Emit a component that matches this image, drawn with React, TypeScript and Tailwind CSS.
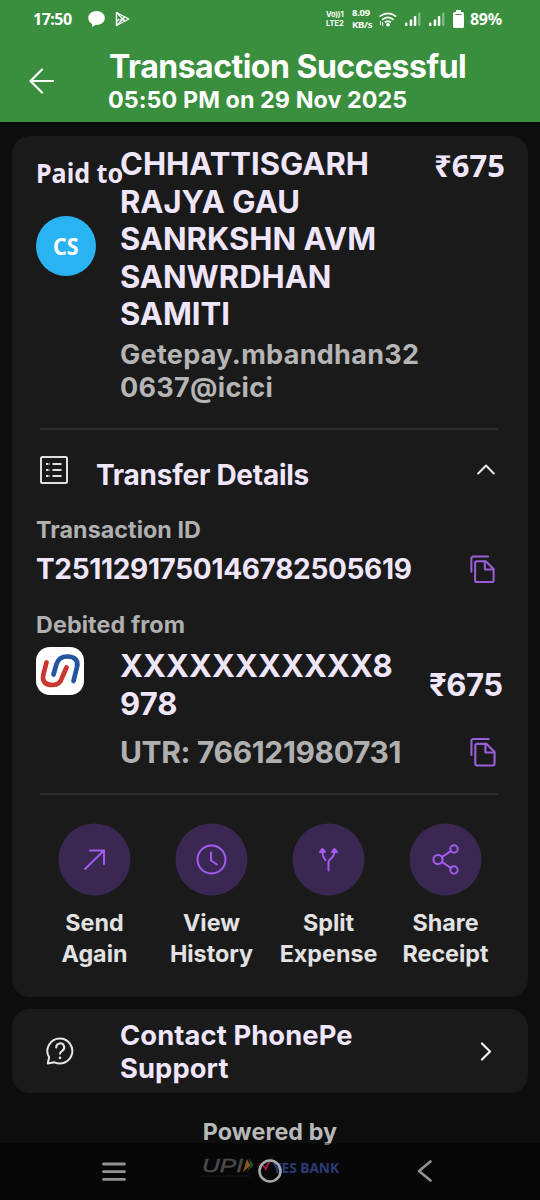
import type { ReactNode } from 'react';

interface Action {
  label: string[];
  icon: ReactNode;
}

const CopyIcon = ({ className = '' }: { className?: string }) => (
  <svg viewBox="0 0 27 31" fill="none" stroke="#9a5fd8" strokeWidth="2.200" strokeLinejoin="round" strokeLinecap="round" className={className}>
    <path d="M1.500 18V3.500a2 2 0 0 1 2-2H19.500" />
    <path d="M7.500 6.500h9.500l8.500 8.500v12a2 2 0 0 1-2 2h-16a2 2 0 0 1-2-2v-18.500a2 2 0 0 1 2-2z" />
    <path d="M16 7v8.500h9" />
  </svg>
);

const SignalIcon = () => (
  <svg viewBox="0 0 17 15" className="h-[15px] w-[17px]" fill="#fff">
    <rect x="0" y="10.500" width="2.500" height="3.500" rx="1" />
    <rect x="4.700" y="7.500" width="2.500" height="6.500" rx="1" />
    <rect x="8.800" y="4" width="2.500" height="10" rx="1" />
    <rect x="13" y="0.500" width="2.500" height="13.500" rx="1" opacity="0.35" />
  </svg>
);

const actions: Action[] = [
  {
    label: ['Send', 'Again'],
    icon: <path d="M26.500 45.500 45.500 27M31.500 27h14v13.500" />,
  },
  {
    label: ['View', 'History'],
    icon: (
      <>
        <circle cx="36" cy="36" r="14" />
        <path d="M35.500 29v8l6 4" />
      </>
    ),
  },
  {
    label: ['Split', 'Expense'],
    icon: (
      <>
        <path d="M36 47v-8.500c0-3 6-3.500 6-11M30 27.500c0 4.500 1 7 3 9" />
        <path d="M27.500 28.500l2.500-3 2.500 3zM39.500 28.500l2.500-3 2.500 3z" fill="#a45cf0" />
      </>
    ),
  },
  {
    label: ['Share', 'Receipt'],
    icon: (
      <>
        <circle cx="28.500" cy="36" r="4.600" />
        <circle cx="44.500" cy="25.500" r="3.700" />
        <circle cx="44.500" cy="46.500" r="3.700" />
        <path d="M32.500 33.500l8.800-5.800M32.500 38.500l8.800 5.800" />
      </>
    ),
  },
];

const StatusBar = () => (
  <div className="flex h-[38px] items-center pl-[33px] pr-[38px] font-['Noto_Sans',sans-serif] font-bold text-white">
    <span className="w-[55px] text-[16px] leading-[18px] tracking-[-0.5px]">17:50</span>
    <svg viewBox="0 0 17 16" className="h-4 w-[17px]" fill="#fff">
      <path d="M8.500 0C3.900 0 .3 3 .3 7c0 2.600 1.500 4.900 3.900 6.100L4 16l3.400-2h1.100c4.700 0 8.300-3.100 8.300-7S13.200 0 8.500 0z" />
    </svg>
    <svg viewBox="0 0 15 16" className="ml-2.5 h-4 w-[15px]" fill="none" stroke="#fff" strokeWidth="1.400" strokeLinejoin="round">
      <path d="M1.500 1.500v13L13.800 8z" />
      <path d="M1.500 1.500l8.500 8.700M1.500 14.500L10 5.800M4.300 8l-2.800 2.500M7 8l-1.500 1.500" />
    </svg>
    <div className="ml-auto flex items-center">
      <div className="w-[26px] font-['Inter',sans-serif] text-[7.500px] leading-[9px]">
        <div className="tracking-[-0.200px]">Vo))1</div>
        <div>LTE2</div>
      </div>
      <div className="w-[27px] text-[9.500px] leading-[12px] tracking-[-0.3px]">
        <div>8.09</div>
        <div>KB/s</div>
      </div>
      <svg viewBox="0 0 18 15" className="mr-2 h-[15px] w-[18px]" fill="none" stroke="#fff" strokeWidth="1.700" strokeLinecap="round">
        <path d="M1.200 4.200c4.600-3.700 10.800-3.700 15.400 0M3.800 7.300c3.100-2.400 7.100-2.400 10.200 0M6.500 10c1.600-1.200 3.200-1.200 4.800 0" />
        <circle cx="9" cy="12.600" r="1" fill="#fff" />
        <path d="M1.500 9.500v3M3.700 10.500v3" strokeWidth="1" />
      </svg>
      <SignalIcon />
      <span className="w-[7px]" />
      <SignalIcon />
      <svg viewBox="0 0 11 18" className="ml-[7px] h-[18px] w-[11px]" fill="#fff">
        <path d="M3 0h5v2h1.500A1.500 1.500 0 0 1 11 3.500v13A1.500 1.500 0 0 1 9.500 18h-8A1.500 1.500 0 0 1 0 16.500v-13A1.500 1.500 0 0 1 1.500 2H3z" />
        <path d="M2.500 4.500h6" stroke="#388e3c" strokeWidth="1" />
      </svg>
      <span className="ml-1.5 w-8 text-[16px] leading-[18px] tracking-[-0.3px]">89%</span>
    </div>
  </div>
);

const Header = () => (
  <header className="h-[122px] bg-[#398f3d] text-white">
    <StatusBar />
    <div className="flex pt-[9px]">
      <svg viewBox="0 0 26 26" className="ml-[29px] mt-[21px] h-[26px] w-[26px]" fill="none" stroke="#fff" strokeWidth="2.200" strokeLinecap="round" strokeLinejoin="round">
        <path d="M24 13H1.500M13 1.500L1.500 13l11.500 11.500" />
      </svg>
      <div className="ml-[54px]">
        <h1 className="whitespace-nowrap text-[32px] font-bold leading-[39px] tracking-[-0.500px]">Transaction Successful</h1>
        <p className="-ml-px whitespace-nowrap text-[23.300px] font-bold leading-7 tracking-[0.080px]">05:50 PM on 29 Nov 2025</p>
      </div>
    </div>
  </header>
);

const Payee = () => (
  <section className="flex h-[292px] pl-6 pt-[9px]">
    <div className="w-[84px] shrink-0 pt-[10px]">
      <div className="h-[37px] origin-left scale-x-[0.93] whitespace-nowrap font-['Noto_Sans',sans-serif] text-[27px] font-bold leading-[36px] text-[#f0e6fc]">
        Paid to
      </div>
      <div className="mt-[24px] flex h-[60px] w-[60px] items-center justify-center rounded-full bg-[#29b3f3] font-['Noto_Sans',sans-serif] text-[23px] font-bold text-white">
        <span className="scale-x-[0.93]">CS</span>
      </div>
    </div>
    <div className="w-[314px] shrink-0">
      <h2 className="text-[31px] font-bold leading-[37.500px] text-[#f0e6fc]">
        CHHATTISGARH
        <br />
        RAJYA GAU
        <br />
        SANRKSHN AVM
        <br />
        SANWRDHAN
        <br />
        SAMITI
      </h2>
      <p className="mt-[6.500px] text-[27px] font-bold leading-[32.700px] tracking-[0.300px] text-[#b5b5b5]">
        Getepay.mbandhan32
        <br />
        0637@icici
      </p>
    </div>
    <span className="mt-px h-[38px] font-['Noto_Sans',sans-serif] text-[31px] font-bold leading-[38px] text-[#f0e6fc]">₹675</span>
  </section>
);

const TransferDetails = () => (
  <section className="h-[363px] pl-6">
    <div className="flex h-[61px] pt-[27px]">
      <svg viewBox="0 0 28 28" className="-mt-px ml-1 h-7 w-7" fill="none" stroke="#e0e0e0" strokeWidth="2">
        <rect x="1" y="1" width="26" height="26" rx="1.500" />
        <path d="M12.500 8h9M12.500 14h9M12.500 20h9" />
        <path d="M6 8h4M6 14h4M6 20h4" strokeDasharray="2.500 1" />
      </svg>
      <h3 className="ml-[28px] mt-px w-[381px] text-[28px] font-bold leading-[34px] tracking-[-0.260px] text-[#f0e6fc]">Transfer Details</h3>
      <svg viewBox="0 0 18 11" className="mt-[7px] h-[11px] w-[18px]" fill="none" stroke="#e6e6e6" strokeWidth="2" strokeLinecap="round" strokeLinejoin="round">
        <path d="M1.200 9.500L9 1.500l7.800 8" />
      </svg>
    </div>
    <p className="mt-[25px] text-[23.300px] font-bold leading-7 tracking-[0.050px] text-[#b0b0b0]">Transaction ID</p>
    <div className="mt-2 flex h-[34px]">
      <span className="w-[434px] text-[28px] font-bold leading-[34px] tracking-[-0.330px] text-[#f0e6fc]">T2511291750146782505619</span>
      <CopyIcon className="mt-[3px] h-[29px] w-[25px]" />
    </div>
    <p className="mt-[25px] text-[23.300px] font-bold leading-7 tracking-[0.100px] text-[#b0b0b0]">Debited from</p>
    <div className="mt-[8px] flex h-[86px]">
      <svg viewBox="0 0 48 48" className="h-12 w-12 shrink-0" fill="none" strokeWidth="4.700" strokeLinecap="round">
        <rect width="48" height="48" rx="14" fill="#fff" />
        <path d="M10.500 15.500L7.500 27c-2 8 2.500 11 9 11 6 0 8.500-3 9.800-8L30.500 20.500" stroke="#c9372f" />
        <path d="M17.500 27.500L20.500 17c1.700-5.500 5.500-7.500 11-7.500 7.500 0 11 4 9.500 10.500L37.500 34" stroke="#2257a0" />
      </svg>
      <div className="ml-9 w-[309px] text-[31px] font-bold leading-[37.500px] tracking-[0.120px] text-[#f0e6fc]">
        XXXXXXXXXXX8
        <br />
        978
      </div>
      <span className="mt-[19px] h-[37px] text-[31px] font-bold leading-[37px] tracking-[-0.400px] text-[#f0e6fc]">₹675</span>
    </div>
    <div className="flex">
      <span className="ml-[84px] w-[350px] text-[30px] font-bold leading-[38px] tracking-[-0.370px] text-[#b0b0b0]">UTR: 766121980731</span>
      <CopyIcon className="mt-1 h-[31px] w-[26px]" />
    </div>
  </section>
);

const Divider = () => <div className="ml-7 mr-[30px] h-0.5 bg-[#2d2d2d]" />;

const QuickActions = () => (
  <section className="grid grid-cols-[repeat(4,117px)] pl-6 pt-[28.500px]">
    {actions.map((action) => (
      <div key={action.label[1]} className="flex flex-col items-center">
        <svg viewBox="0.500 0.500 72 72" className="h-[72px] w-[72px] overflow-visible" fill="none" stroke="#a45cf0" strokeWidth="2" strokeLinecap="round" strokeLinejoin="round">
          <circle cx="36" cy="36" r="36" fill="#3a2852" stroke="none" />
          {action.icon}
        </svg>
        <span className="mt-[11px] text-center text-[23.300px] font-bold leading-[31.500px] text-[#e2e2e2]">
          {action.label[0]}
          <br />
          {action.label[1]}
        </span>
      </div>
    ))}
  </section>
);

const Support = () => (
  <section className="mx-3 mt-3 flex h-[84px] items-center rounded-[18px] bg-[#1a1a1a]">
    <svg viewBox="0 0 28 28" className="ml-[34px] h-7 w-7" fill="none" stroke="#e6e6e6" strokeWidth="2" strokeLinecap="round" strokeLinejoin="round">
      <path d="M14 1.500A12.500 12.500 0 1 1 8.500 25.300L1.800 26.500l1.300-6.200A12.500 12.500 0 0 1 14 1.500z" />
      <path d="M10.200 10.500a4 4 0 1 1 6 3.300c-1.500.8-2.200 1.500-2.200 3" />
      <path d="M14 20.800v.2" strokeWidth="2.400" />
    </svg>
    <h3 className="ml-[46px] w-[360px] pt-0.5 text-[27.300px] font-bold leading-[33px] tracking-[0.120px] text-[#f0e6fc]">
      Contact PhonePe
      <br />
      Support
    </h3>
    <svg viewBox="0 0 12 20" className="h-5 w-3" fill="none" stroke="#f0f0f0" strokeWidth="2.200" strokeLinecap="round" strokeLinejoin="round">
      <path d="M2 2.500l8 8-8 8" />
    </svg>
  </section>
);

const Footer = () => (
  <footer className="mt-[25px] flex flex-col items-center">
    <p className="text-[23.300px] font-bold leading-7 tracking-[0.080px] text-[#b8b8b8]">Powered by</p>
    <svg viewBox="0 0 144 26" className="mt-[8px] h-[26px] w-[144px]">
      <text x="4" y="18" textLength="41" lengthAdjust="spacingAndGlyphs" fill="#7c7c7c" stroke="#7c7c7c" strokeWidth="0.400" fontSize="19" fontStyle="italic" fontFamily="Liberation Sans">
        UPI
      </text>
      <path d="M49 5l3.500 6.500L45 18z" fill="#f58a35" />
      <path d="M51 4l4.500 7L48 18.500l4.500-7z" fill="#2f9440" />
      <path d="M3 22h50" stroke="#333" strokeDasharray="2 1" />
      <path d="M60 9.500c4-.5 6 1.500 7.500 3.500 2-5 5-8 9-11-4 5-6 9-8.500 15.500-2-4-4-6.500-8-8z" fill="#ff3560" />
      <text x="75" y="18.500" textLength="66" lengthAdjust="spacingAndGlyphs" fill="#4862c4" fontSize="14" fontWeight="700" fontFamily="Open Sans">
        YES BANK
      </text>
    </svg>
  </footer>
);

const NavBar = () => (
  <nav className="absolute inset-x-0 bottom-0 flex h-[57px] bg-black/40">
    <svg viewBox="0 0 24 19" className="ml-[102px] mt-[19px] h-[19px] w-6" stroke="#929292" strokeWidth="2.800" strokeLinecap="round">
      <path d="M1.500 2h21M1.500 9.700h21M1.500 17.400h21" />
    </svg>
    <svg viewBox="0 0 24 24" className="ml-[132px] mt-4 h-6 w-6" fill="none" stroke="#a8a8a8" strokeWidth="2.600">
      <circle cx="12" cy="12" r="10.500" />
    </svg>
    <svg viewBox="0 0 16 22" className="ml-[135px] mt-[17px] h-[22px] w-4" fill="none" stroke="#929292" strokeWidth="2.600" strokeLinecap="round" strokeLinejoin="round">
      <path d="M13.500 1.500L2 11l11.500 9.500" />
    </svg>
  </nav>
);

export default function App() {
  return (
    <div className="relative h-[1200px] w-[540px] overflow-hidden bg-[#0d0d0d] font-['Inter',sans-serif]">
      <Header />
      <main className="mx-3 mt-[14px] h-[861px] rounded-[18px] bg-[#1a1a1a]">
        <Payee />
        <Divider />
        <TransferDetails />
        <Divider />
        <QuickActions />
      </main>
      <Support />
      <Footer />
      <NavBar />
    </div>
  );
}
